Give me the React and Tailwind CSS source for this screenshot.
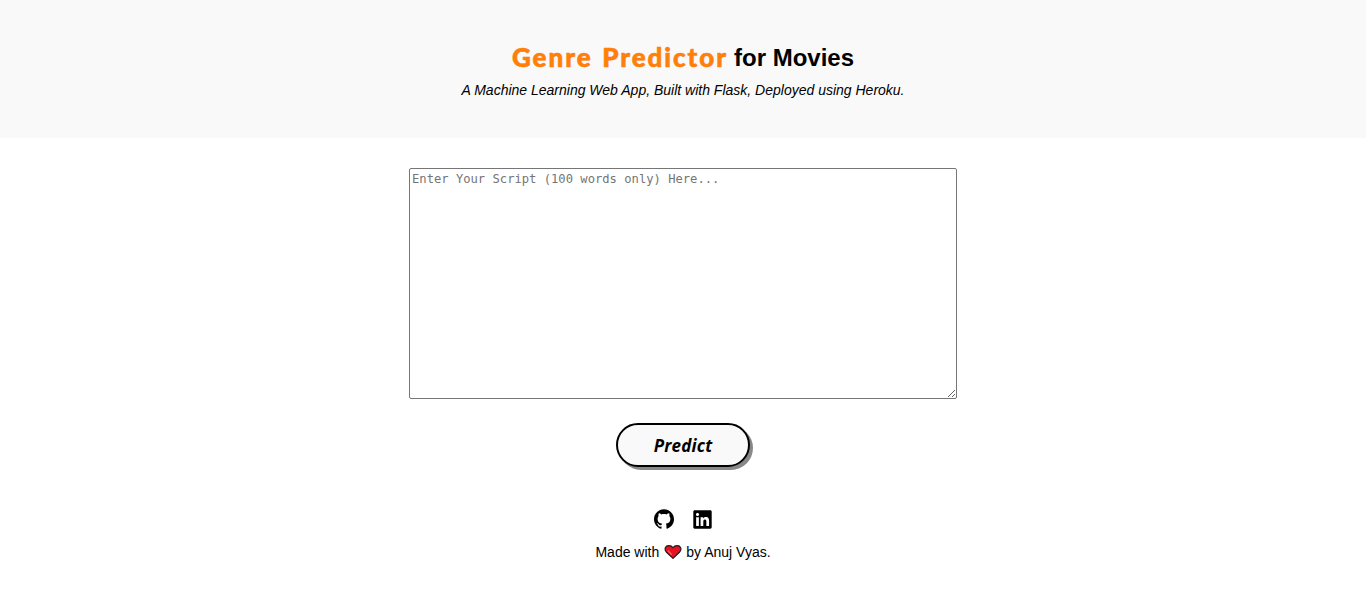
import { SiGithub } from 'react-icons/si';
import { FaLinkedin } from 'react-icons/fa';

function Heart() {
  return (
    <svg viewBox="0 0 18 16" className="h-4 w-[18px]">
      <path
        d="M9 14.4 2.3 8C-.1 5 1.4 1.6 4.8 1.6 6.8 1.6 8.2 2.5 9 3.8 9.8 2.5 11.2 1.6 13.2 1.6c3.4 0 4.9 3.4 2.5 6.4Z"
        fill="#e81123"
        stroke="#241a1b"
        strokeWidth="1.2"
        strokeLinejoin="round"
      />
      <path d="M4.2 7 7.4 10.4" stroke="#f4695f" strokeWidth="1.3" strokeLinecap="round" />
    </svg>
  );
}

export default function App() {
  return (
    <div className="flex min-h-[616px] flex-col items-center bg-white font-['Liberation_Sans',sans-serif] text-black">
      <header className="flex h-[138px] w-full flex-col items-center bg-[#f9f9f9] pt-10">
        <h1 className="flex h-9 items-center whitespace-nowrap text-2xl font-bold">
          <span className="mr-[7px] w-[215px] pb-0.5 font-['Lato',sans-serif] text-[26px] font-black tracking-[1.95px] text-[#ff7f0a] [-webkit-text-stroke:0.6px_#ff7f0a] [word-spacing:1.5px]">
            Genre Predictor
          </span>
          <span>for Movies</span>
        </h1>
        <p className="mt-1 text-sm italic">
          A Machine Learning Web App, Built with Flask, Deployed using Heroku.
        </p>
      </header>
      <textarea
        className="mt-[30px] block h-[231px] w-[548px] resize rounded-[2px] border border-[#767676] bg-white p-[2px] font-['DejaVu_Sans_Mono',monospace] text-[12.17px] leading-4 placeholder:text-[#757575]"
        placeholder="Enter Your Script (100 words only) Here..."
      />
      <button className="mt-6 h-11 w-[134px] rounded-full border-2 border-black bg-[#f9f9f9] pt-0.5 font-['Open_Sans',sans-serif] text-[17px] font-bold italic tracking-[0.2px] shadow-[3px_3px_0_#888]">
        Predict
      </button>
      <div className="mt-[41px] flex h-[22px] items-center gap-[18px] pl-px">
        <SiGithub size={20} />
        <FaLinkedin size={21} />
      </div>
      <footer className="mt-3 flex h-5 items-center text-sm">
        <span>Made with</span>
        <span className="mx-[4.5px]"><Heart /></span>
        <span>by Anuj Vyas.</span>
      </footer>
    </div>
  );
}
